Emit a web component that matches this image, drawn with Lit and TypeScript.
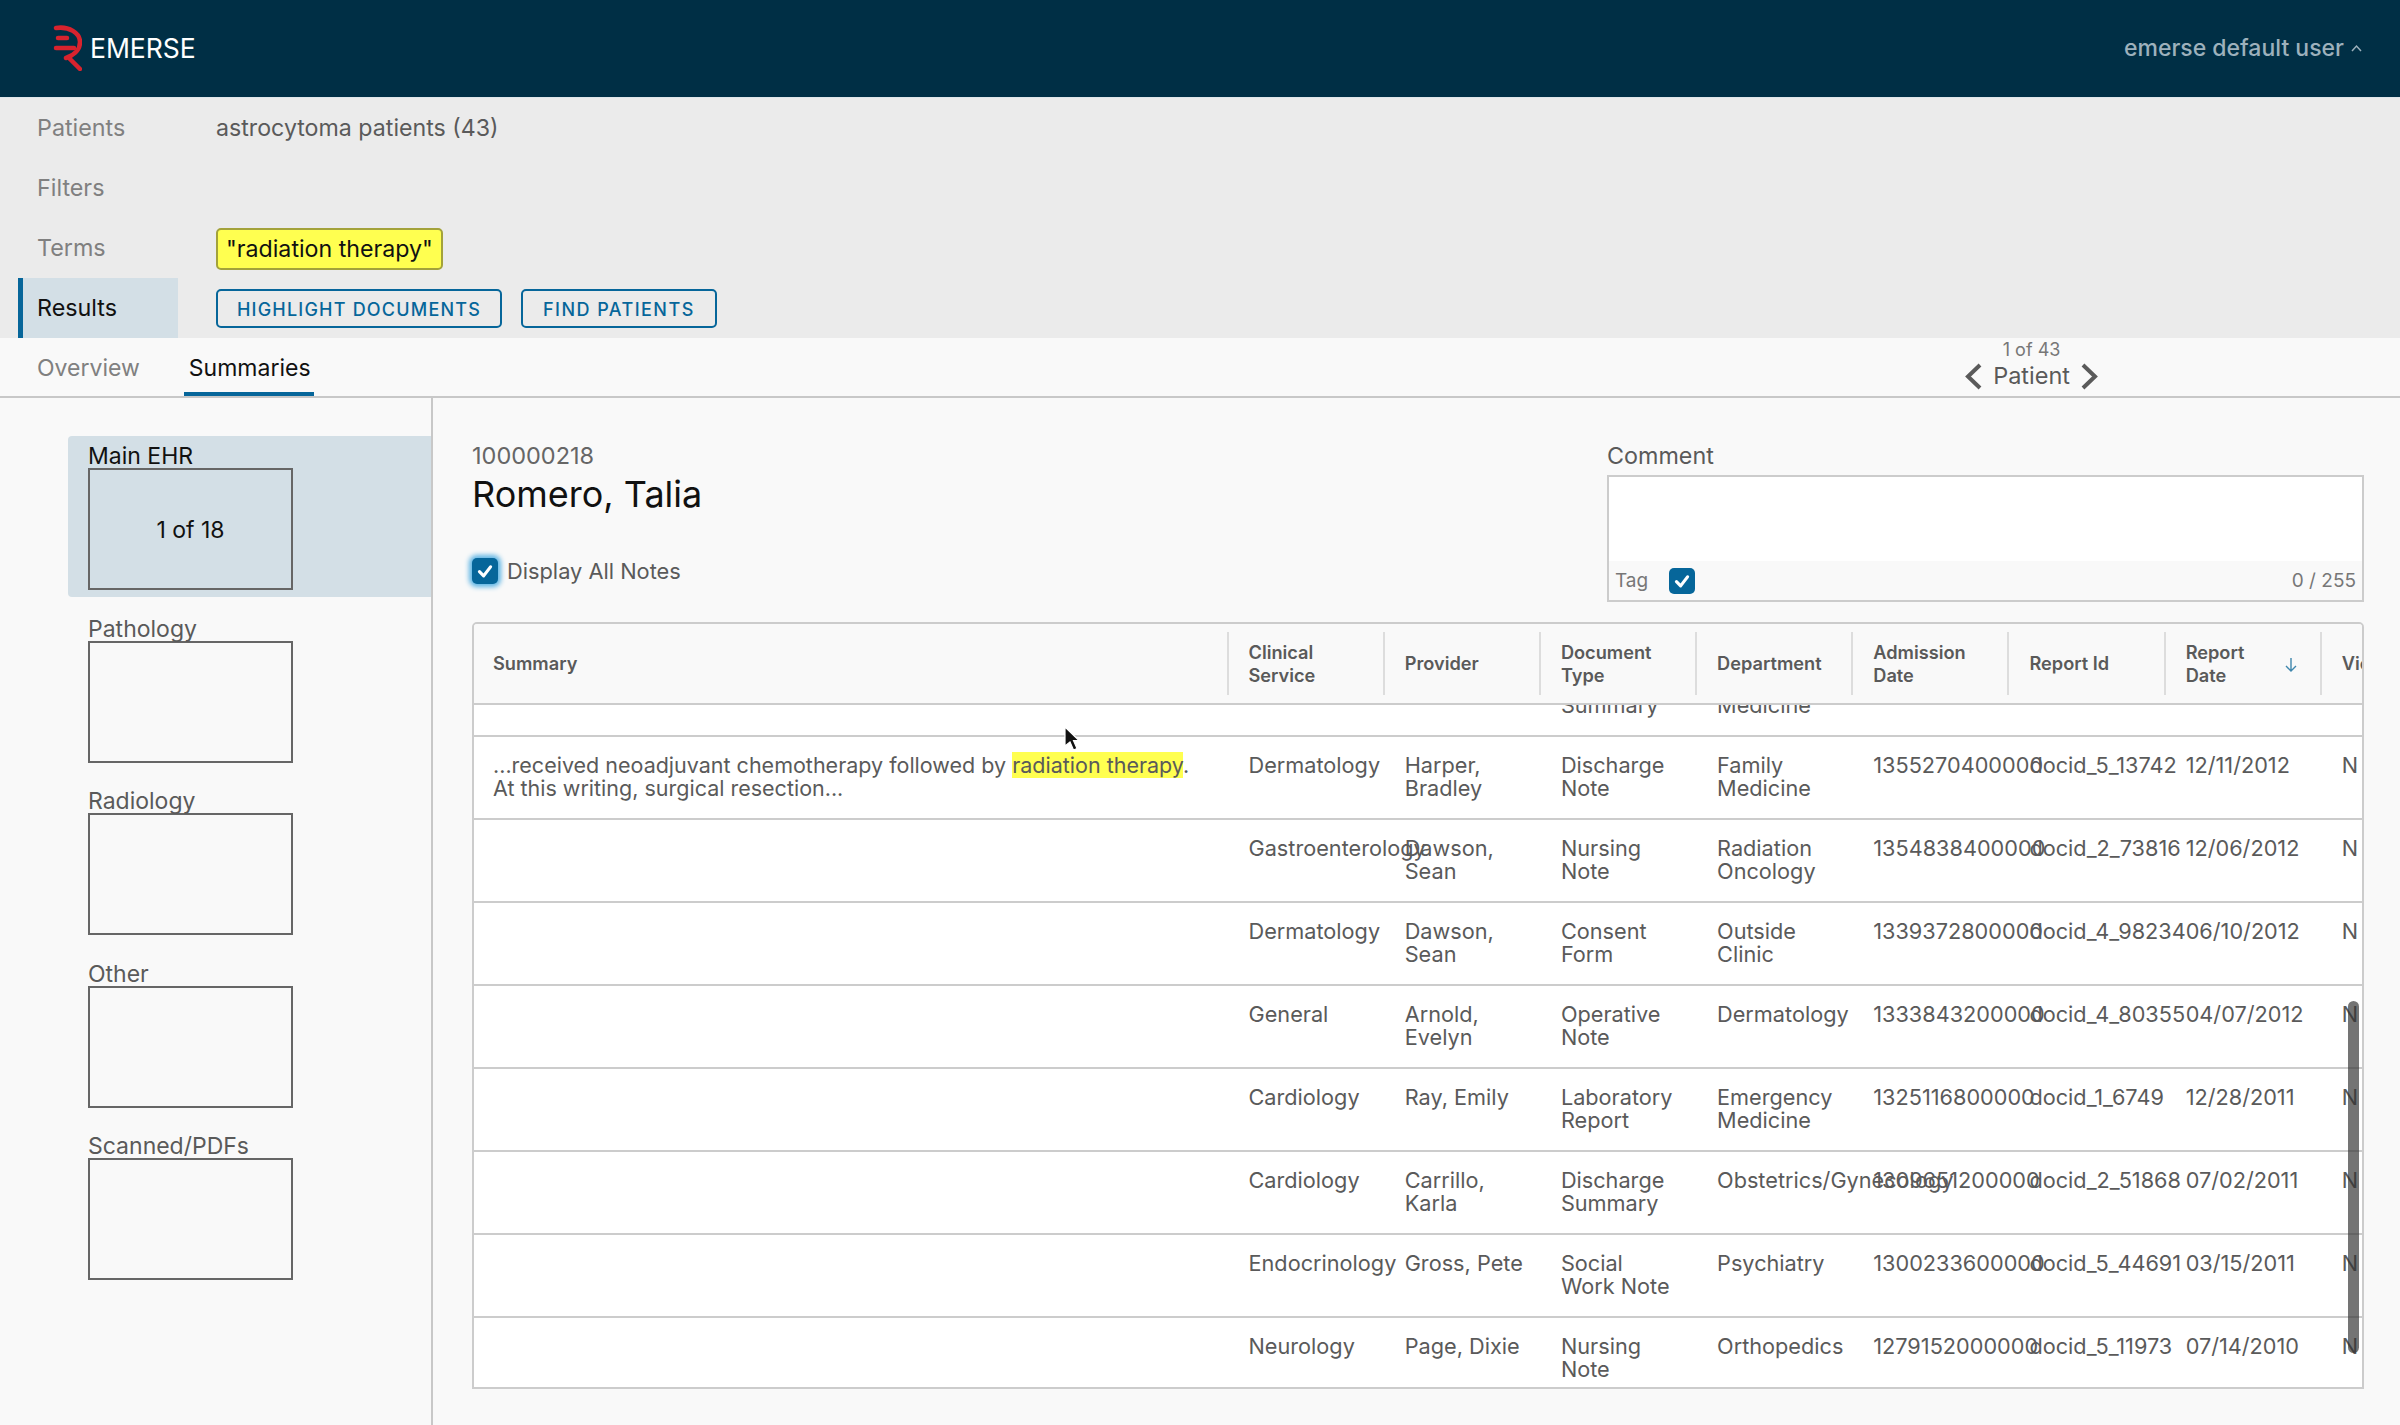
import { LitElement, html, css } from "lit";
import { customElement } from "lit/decorators.js";

const NOTE_ROWS = [
  ["", "", "Discharge Summary", "Family Medicine", "", "", ""],
  ["Dermatology", "Harper, Bradley", "Discharge Note", "Family Medicine", "1355270400000", "docid_5_13742", "12/11/2012"],
  ["Gastroenterology", "Dawson, Sean", "Nursing Note", "Radiation Oncology", "1354838400000", "docid_2_73816", "12/06/2012"],
  ["Dermatology", "Dawson, Sean", "Consent Form", "Outside Clinic", "1339372800000", "docid_4_98234", "06/10/2012"],
  ["General", "Arnold, Evelyn", "Operative Note", "Dermatology", "1333843200000", "docid_4_80355", "04/07/2012"],
  ["Cardiology", "Ray, Emily", "Laboratory Report", "Emergency Medicine", "1325116800000", "docid_1_6749", "12/28/2011"],
  ["Cardiology", "Carrillo, Karla", "Discharge Summary", "Obstetrics/\u2060Gynecology", "1309651200000", "docid_2_51868", "07/02/2011"],
  ["Endocrinology", "Gross, Pete", "Social Work\u00a0Note", "Psychiatry", "1300233600000", "docid_5_44691", "03/15/2011"],
  ["Neurology", "Page, Dixie", "Nursing Note", "Orthopedics", "1279152000000", "docid_5_11973", "07/14/2010"],
];

const HEADERS = ["Clinical\nService", "Provider", "Document\nType", "Department", "Admission\nDate", "Report Id"];
const SOURCES = ["Pathology", "Radiology", "Other", "Scanned/PDFs"];

const check = html`<svg viewBox="0 0 26 26" width="18" height="18" fill="none" stroke="#fff" stroke-width="4.6" stroke-linecap="round" stroke-linejoin="round"><path d="M5 14l6 6L21 7" /></svg>`;

@customElement("app-root")
export class AppRoot extends LitElement {
  static styles = css`
    :host {
      display: block;
      position: relative;
      height: 1425px;
      overflow: hidden;
      background: #f9f9f9;
      color: #5a5a5a;
      font-family: Inter, "Open Sans", sans-serif;
      font-size: 21.7px;
    }
    .topbar {
      height: 97px;
      background: #002f45;
      display: flex;
      align-items: center;
      justify-content: space-between;
      padding: 0 38px 1px 53px;
      box-sizing: border-box;
    }
    .brand {
      display: flex;
      align-items: center;
      gap: 8px;
      color: #fff;
      font-size: 26.5px;
      font-weight: 400;
    }
    .user {
      display: flex;
      align-items: center;
      gap: 7px;
      color: #9db1bc;
      font-size: 23px;
      font-weight: 500;
    }
    .steps {
      height: 241px;
      box-sizing: border-box;
      border-top: 1px solid #dfe6ea;
      background: #ebebeb;
      padding-left: 18px;
      display: grid;
      grid-template-columns: 160px 1fr;
      grid-auto-rows: 60px;
      column-gap: 38px;
      align-items: center;
    }
    .step {
      height: 60px;
      display: flex;
      align-items: center;
      padding: 0 0 2px 19px;
      box-sizing: border-box;
      font-size: 23.3px;
      color: #808080;
    }
    .step.active {
      background: #d3dfe6;
      border-left: 5px solid #06669a;
      padding-left: 14px;
      color: #111;
    }
    .cohort {
      font-size: 23.2px;
      color: #5a5a5a;
    }
    .chip {
      display: inline-block;
      background: #ffff50;
      border: 2px solid #a3a23a;
      border-radius: 5px;
      padding: 0 8px;
      height: 42px;
      line-height: 38px;
      box-sizing: border-box;
      color: #111;
      font-size: 23.2px;
      transform: translateY(1px);
    }
    .actions {
      display: flex;
      gap: 19px;
      margin-top: 1px;
    }
    .btn {
      border: 2px solid #06669a;
      border-radius: 5px;
      color: #06669a;
      height: 39px;
      line-height: 37px;
      box-sizing: border-box;
      padding: 0 19px;
      font-size: 18px;
      font-weight: 500;
      letter-spacing: 1.2px;
    }
    .btn:last-child {
      letter-spacing: 1.45px;
      padding: 0 20px;
    }
    .tabs {
      height: 60px;
      box-sizing: border-box;
      border-bottom: 2px solid #c8c8c8;
      display: flex;
      justify-content: space-between;
      padding: 0 302px 0 32px;
    }
    .tab-list {
      display: flex;
      gap: 39px;
    }
    .tab {
      padding: 0 5px;
      height: 58px;
      line-height: 60px;
      box-sizing: border-box;
      font-size: 23px;
      color: #808080;
    }
    .tab.active {
      color: #111;
      border-bottom: 4px solid #06669a;
      width: 130px;
    }
    .pager {
      display: flex;
      flex-direction: column;
      align-items: center;
    }
    .pager-count {
      font-size: 18px;
      line-height: 22px;
      margin-top: 1px;
      color: #777;
    }
    .pager-row {
      display: flex;
      align-items: center;
      gap: 11px;
      font-size: 23.5px;
      line-height: 30px;
      color: #5a5a5a;
    }
    .main {
      display: flex;
      height: 1027px;
    }
    .sources {
      width: 433px;
      box-sizing: border-box;
      border-right: 2px solid #c8c8c8;
      padding: 38px 0 0 68px;
      display: flex;
      flex-direction: column;
      gap: 11.5px;
    }
    .source {
      height: 161px;
      box-sizing: border-box;
      padding: 5px 20px 0;
      color: #5a5a5a;
      font-size: 23px;
    }
    .source.active {
      background: #d3dfe6;
      border-radius: 4px 0 0 4px;
      color: #111;
    }
    .source-label {
      height: 27px;
      line-height: 30px;
    }
    .source-box {
      width: 205px;
      height: 122px;
      box-sizing: border-box;
      border: 2px solid #666;
      padding-top: 2px;
      display: flex;
      align-items: center;
      justify-content: center;
    }
    .detail {
      flex: 1;
      min-width: 0;
      padding: 43px 36px 0 39px;
    }
    .detail-top {
      display: flex;
      justify-content: space-between;
      height: 161px;
      margin-bottom: 20px;
    }
    .mrn {
      font-size: 23.5px;
      line-height: 30px;
      color: #666;
    }
    .name {
      font-size: 36px;
      line-height: 40px;
      margin-top: 3px;
      color: #111;
    }
    .display-all {
      display: flex;
      align-items: center;
      gap: 9px;
      margin-top: 44px;
      font-size: 21.8px;
    }
    .box {
      width: 26px;
      height: 26px;
      border-radius: 5px;
      background: #06669a;
      display: flex;
      align-items: center;
      justify-content: center;
    }
    .box.focus {
      box-shadow: 0 0 5px 3px #5db4e4;
    }
    .comment {
      width: 757px;
    }
    .comment-label {
      line-height: 30px;
      font-size: 23.3px;
      margin-bottom: 4px;
    }
    .comment-box {
      height: 127px;
      box-sizing: border-box;
      border: 2px solid #ccc;
      background: #fff;
      display: flex;
      flex-direction: column;
      justify-content: flex-end;
    }
    .comment-foot {
      height: 39px;
      background: #f9f9f9;
      display: flex;
      align-items: center;
      padding: 0 6px;
      font-size: 19px;
      color: #777;
    }
    .comment-foot .box {
      margin-left: 21px;
    }
    .counter {
      margin-left: auto;
    }
    .table {
      border: 2px solid #ccc;
      border-radius: 5px 5px 0 0;
      height: 767px;
      box-sizing: border-box;
      overflow: hidden;
      position: relative;
    }
    .head,
    .row {
      display: grid;
      grid-template-columns: 752.5px repeat(8, 156.2px);
    }
    .head {
      height: 81px;
      box-sizing: border-box;
      border-bottom: 2px solid #ccc;
      align-items: center;
      position: relative;
      z-index: 1;
      background: #f9f9f9;
      font-size: 18.2px;
      font-weight: 600;
      line-height: 23px;
      color: #5a5a5a;
    }
    .th {
      height: 63px;
      box-sizing: border-box;
      display: flex;
      align-items: center;
      padding: 0 14px 0 20px;
      border-left: 2px solid #ddd;
      white-space: pre-line;
    }
    .th:first-child {
      border-left: none;
      padding-left: 19px;
    }
    .sort {
      margin: 3px 8px 0 auto;
    }
    .body {
      height: 684px;
      overflow: hidden;
      background: #fff;
    }
    .rows {
      margin-top: -51px;
    }
    .row {
      height: 83px;
      box-sizing: border-box;
      border-bottom: 2px solid #ccc;
      padding-top: 17px;
      line-height: 23px;
      color: #5a5a5a;
    }
    .td {
      padding: 0 12px 0 22px;
      min-width: 0;
    }
    .td:first-child {
      padding-left: 19px;
      font-size: 21.5px;
    }
    mark {
      background: #ffff50;
      color: inherit;
    }
    .thumb {
      position: absolute;
      right: 3px;
      top: 377px;
      width: 11px;
      height: 352px;
      border-radius: 6px;
      background: rgba(50, 50, 50, 0.68);
      z-index: 2;
    }
    .cursor {
      position: absolute;
      left: 1063px;
      top: 725px;
    }
  `;

  private renderRow(cells: string[], index: number) {
    return html`<div class="row">
      <div class="td">
        ${index === 1
          ? html`...received neoadjuvant chemotherapy followed by <mark>radiation therapy</mark>.<br />At this writing, surgical resection...`
          : ""}
      </div>
      ${cells.map((c) => html`<div class="td">${c}</div>`)}
      <div class="td">${index === 0 ? "" : "N"}</div>
    </div>`;
  }

  render() {
    return html`
      <div class="topbar">
        <div class="brand">
          <svg width="29" height="46" viewBox="0 0 29 46" fill="none" stroke="#d8232e" stroke-width="4.5" stroke-linecap="round">
            <path d="M3 3C16 1 27 8 27 17c0 9-8 14-14 16" />
            <path d="M5 13h9" />
            <path d="M3 23h18" />
            <path d="M16 33l11 11" />
          </svg>
          <span>EMERSE</span>
        </div>
        <div class="user">
          <span>emerse default user</span>
          <svg width="11" height="8" viewBox="0 0 11 8" fill="none" stroke="#9db1bc" stroke-width="1.5"><path d="M1 7l4.5-5L10 7" /></svg>
        </div>
      </div>

      <div class="steps">
        <div class="step">Patients</div>
        <div class="cohort">astrocytoma patients (43)</div>
        <div class="step">Filters</div>
        <div></div>
        <div class="step">Terms</div>
        <div><span class="chip">"radiation therapy"</span></div>
        <div class="step active">Results</div>
        <div class="actions">
          <div class="btn">HIGHLIGHT DOCUMENTS</div>
          <div class="btn">FIND PATIENTS</div>
        </div>
      </div>

      <div class="tabs">
        <div class="tab-list">
          <div class="tab">Overview</div>
          <div class="tab active">Summaries</div>
        </div>
        <div class="pager">
          <div class="pager-count">1 of 43</div>
          <div class="pager-row">
            <svg width="17" height="27" viewBox="0 0 17 27" fill="none" stroke="#5a5a5a" stroke-width="4"><path d="M15 2L3 13.5 15 25" /></svg>
            <span>Patient</span>
            <svg width="17" height="27" viewBox="0 0 17 27" fill="none" stroke="#5a5a5a" stroke-width="4"><path d="M2 2l12 11.5L2 25" /></svg>
          </div>
        </div>
      </div>

      <div class="main">
        <div class="sources">
          <div class="source active">
            <div class="source-label">Main EHR</div>
            <div class="source-box">1 of 18</div>
          </div>
          ${SOURCES.map(
            (s) => html`<div class="source">
              <div class="source-label">${s}</div>
              <div class="source-box"></div>
            </div>`
          )}
        </div>

        <div class="detail">
          <div class="detail-top">
            <div>
              <div class="mrn">100000218</div>
              <div class="name">Romero, Talia</div>
              <div class="display-all">
                <div class="box focus">${check}</div>
                <span>Display All Notes</span>
              </div>
            </div>
            <div class="comment">
              <div class="comment-label">Comment</div>
              <div class="comment-box">
                <div class="comment-foot">
                  <span>Tag</span>
                  <div class="box">${check}</div>
                  <span class="counter">0 / 255</span>
                </div>
              </div>
            </div>
          </div>

          <div class="table">
            <div class="head">
              <div class="th">Summary</div>
              ${HEADERS.map((h) => html`<div class="th">${h}</div>`)}
              <div class="th">
                <span>Report<br />Date</span>
                <svg class="sort" width="14" height="16" viewBox="0 0 14 16" fill="none" stroke="#3f87ad" stroke-width="1.4"><path d="M7 1v13M2 9l5 5 5-5" /></svg>
              </div>
              <div class="th">View</div>
            </div>
            <div class="body">
              <div class="rows">${NOTE_ROWS.map((r, i) => this.renderRow(r, i))}</div>
            </div>
            <div class="thumb"></div>
          </div>
        </div>
      </div>

      <svg class="cursor" width="18" height="27" viewBox="0 0 18 27">
        <path d="M2 2v19l5-4 3.5 8 3.5-1.5-3.5-8H16z" fill="#111" stroke="#fff" stroke-width="1.2" />
      </svg>
    `;
  }
}
